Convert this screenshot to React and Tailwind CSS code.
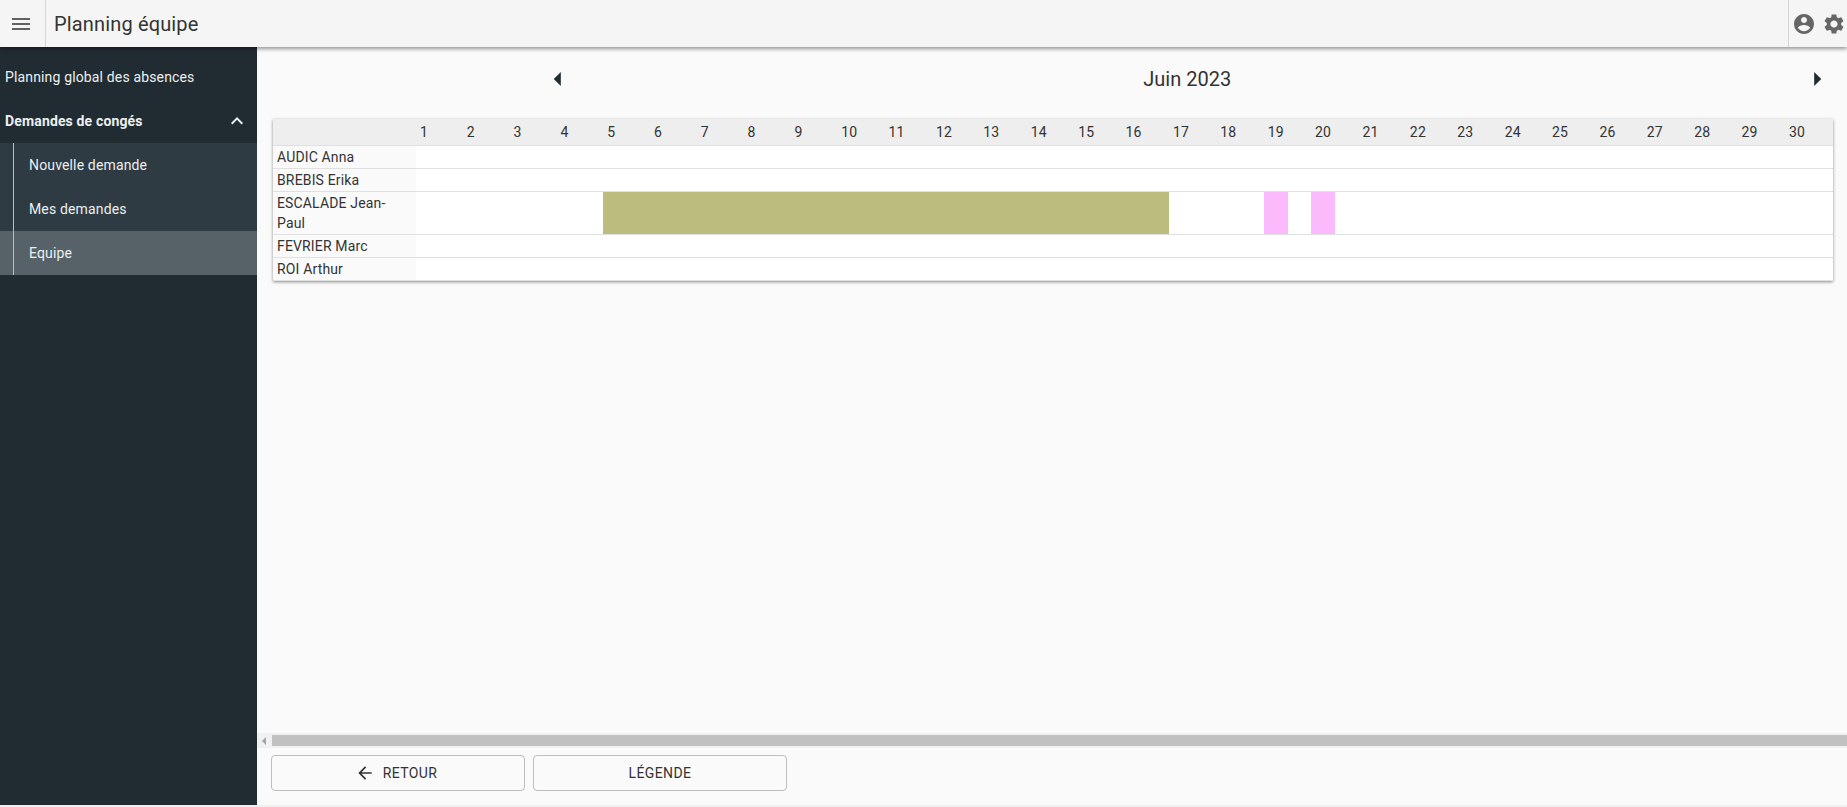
// Team leave planning page: top bar, dark side menu, month grid and footer buttons.
const PEOPLE_BEFORE = ["AUDIC Anna", "BREBIS Erika"];
const PEOPLE_AFTER = ["FEVRIER Marc", "ROI Arthur"];
const DAYS = Array.from({ length: 30 }, (_, i) => i + 1);

function Icon({ d, className }) {
  return (
    <svg viewBox="0 0 24 24" fill="currentColor" className={className}>
      <path d={d} />
    </svg>
  );
}

const ICONS = {
  menu: "M3 18h18v-2H3v2zm0-5h18v-2H3v2zm0-7v2h18V6H3z",
  account:
    "M12 2C6.48 2 2 6.48 2 12s4.48 10 10 10 10-4.48 10-10S17.52 2 12 2zm0 3c1.66 0 3 1.34 3 3s-1.34 3-3 3-3-1.34-3-3 1.34-3 3-3zm0 14.2c-2.5 0-4.71-1.28-6-3.22.03-1.99 4-3.08 6-3.08 1.99 0 5.97 1.09 6 3.08-1.29 1.94-3.5 3.22-6 3.22z",
  settings:
    "M19.14,12.94c0.04-0.3,0.06-0.61,0.06-0.94c0-0.32-0.02-0.64-0.07-0.94l2.03-1.58c0.18-0.14,0.23-0.41,0.12-0.61 l-1.92-3.32c-0.12-0.22-0.37-0.29-0.59-0.22l-2.39,0.96c-0.5-0.38-1.03-0.7-1.62-0.94L14.4,2.81c-0.04-0.24-0.24-0.41-0.48-0.41 h-3.84c-0.24,0-0.43,0.17-0.47,0.41L9.25,5.35C8.66,5.59,8.12,5.92,7.63,6.29L5.24,5.33c-0.22-0.08-0.47,0-0.59,0.22L2.74,8.87 C2.62,9.08,2.66,9.34,2.86,9.48l2.03,1.58C4.84,11.36,4.8,11.69,4.8,12s0.02,0.64,0.07,0.94l-2.03,1.58 c-0.18,0.14-0.23,0.41-0.12,0.61l1.92,3.32c0.12,0.22,0.37,0.29,0.59,0.22l2.39-0.96c0.5,0.38,1.03,0.7,1.62,0.94l0.36,2.54 c0.05,0.24,0.24,0.41,0.48,0.41h3.84c0.24,0,0.44-0.17,0.47-0.41l0.36-2.54c0.59-0.24,1.13-0.56,1.62-0.94l2.39,0.96 c0.22,0.08,0.47,0,0.59-0.22l1.92-3.32c0.12-0.22,0.07-0.47-0.12-0.61L19.14,12.94z M12,15.6c-1.98,0-3.6-1.62-3.6-3.6 s1.62-3.6,3.6-3.6s3.6,1.62,3.6,3.6S13.98,15.6,12,15.6z",
  chevronUp: "M7.41 15.41L12 10.83l4.59 4.58L18 14l-6-6-6 6z",
  arrowLeft: "M14 7l-5 5 5 5V7z",
  arrowRight: "M10 17l5-5-5-5v10z",
  back: "M20 11H7.83l5.59-5.59L12 4l-8 8 8 8 1.41-1.41L7.83 13H20v-2z",
};

function TopBar() {
  return (
    <header className="relative z-10 flex flex-none h-[47px] items-stretch bg-[#f5f5f5] shadow-[0_2px_4px_rgba(0,0,0,0.4)]">
      <div className="flex w-[46px] flex-none items-center justify-center border-r border-[#d4d4d4] pr-[4px]">
        <Icon d={ICONS.menu} className="size-[24px] text-[#616161]" />
      </div>
      <h1 className="flex flex-1 items-center pl-[8px] text-[20px] font-normal tracking-[0.15px] text-[#333]">
        Planning équipe
      </h1>
      <div className="flex w-[59px] flex-none items-center gap-[6px] border-l border-[#d4d4d4] pl-[3px] text-[#666]">
        <Icon d={ICONS.account} className="size-[24px]" />
        <Icon d={ICONS.settings} className="size-[24px]" />
      </div>
    </header>
  );
}

function SideMenu() {
  return (
    <nav className="w-[257px] flex-none bg-[#212c32] pt-[8px] text-[14px] tracking-[0.15px] text-[#eceff1]">
      <div className="flex h-[44px] items-center pl-[5px]">Planning global des absences</div>
      <div className="flex h-[44px] items-center justify-between pl-[5px] pr-[8px] font-bold">
        Demandes de congés
        <Icon d={ICONS.chevronUp} className="size-[24px]" />
      </div>
      <div className="bg-[#2e3b42] pl-[13px]">
        <div className="border-l border-[#b6bec2]">
          <div className="flex h-[44px] items-center pl-[15px]">Nouvelle demande</div>
          <div className="flex h-[44px] items-center pl-[15px]">Mes demandes</div>
        </div>
      </div>
      <div className="bg-[#566168] pl-[13px]">
        <div className="flex h-[44px] items-center border-l border-[#b6bec2] pl-[15px]">Equipe</div>
      </div>
    </nav>
  );
}

function NameCell({ children }) {
  return (
    <div className="w-[143px] flex-none bg-[#fafafa] py-[1px] pl-[4px] pr-[8px] leading-[20px]">{children}</div>
  );
}

function PersonRow({ name }) {
  return (
    <div className="flex border-b border-[#e0e0e0]">
      <NameCell>{name}</NameCell>
      <div className="flex-1" />
    </div>
  );
}

function PlanningTable() {
  return (
    <div className="ml-[16px] mr-[14px] mt-[23px] bg-white text-[14px] tracking-[0.15px] text-[#333] shadow-[0_1px_3px_rgba(0,0,0,0.45)]">
      <div className="flex h-[27px] items-center border-b border-[#e0e0e0] bg-[#eeeeee] pl-[147px]">
        {DAYS.map((day) => (
          <div key={day} className={day < 10 ? "w-[46.8px] flex-none" : "w-[47.4px] flex-none"}>
            {day}
          </div>
        ))}
      </div>
      {PEOPLE_BEFORE.map((name) => (
        <PersonRow key={name} name={name} />
      ))}
      <div className="flex border-b border-[#e0e0e0]">
        <NameCell>ESCALADE Jean-Paul</NameCell>
        <div className="flex flex-1">
          <div className="w-[187px] flex-none" />
          <div className="w-[566px] flex-none bg-[#bcbc7e]" />
          <div className="w-[95px] flex-none" />
          <div className="w-[24px] flex-none bg-[#fbbafb]" />
          <div className="w-[23px] flex-none" />
          <div className="w-[24px] flex-none bg-[#fbbafb]" />
        </div>
      </div>
      {PEOPLE_AFTER.map((name) => (
        <PersonRow key={name} name={name} />
      ))}
    </div>
  );
}

function OutlineButton({ children, className }) {
  return (
    <button
      className={`flex h-[36px] w-[254px] items-center justify-center gap-[8px] rounded-[4px] border border-[#bdbdbd] text-[14px] font-normal uppercase tracking-[0.4px] text-[#333] ${className ?? ""}`}
    >
      {children}
    </button>
  );
}

export default function App() {
  return (
    <div className="flex h-[807px] flex-col overflow-hidden bg-[#fafafa] font-['Roboto',sans-serif]">
      <TopBar />
      <div className="flex flex-1 min-h-0">
        <SideMenu />
        <main className="flex min-w-0 flex-1 flex-col">
          <div className="flex items-center justify-between pl-[283.5px] pr-[13px] pt-[15px] text-[#212c32]">
            <Icon d={ICONS.arrowLeft} className="size-[34px]" />
            <span className="text-[20px] leading-[24px] text-[#333]">Juin 2023</span>
            <Icon d={ICONS.arrowRight} className="size-[34px]" />
          </div>
          <PlanningTable />
          <div className="flex-1" />
          <div className="flex h-[15px] flex-none items-center bg-[#f1f1f1]">
            <div className="ml-[5px] mr-[6px] h-0 w-0 border-y-[4px] border-r-[4px] border-y-transparent border-r-[#a3a3a3]" />
            <div className="h-[11px] flex-1 bg-[#c1c1c1]" />
          </div>
          <div className="mb-[14px] ml-[14px] mt-[7px] flex gap-[8px]">
            <OutlineButton className="pr-[4px]">
              <Icon d={ICONS.back} className="size-[20px]" />
              Retour
            </OutlineButton>
            <OutlineButton>Légende</OutlineButton>
          </div>
        </main>
      </div>
      <div className="h-[2px] flex-none bg-[#f0f0f0]" />
    </div>
  );
}
